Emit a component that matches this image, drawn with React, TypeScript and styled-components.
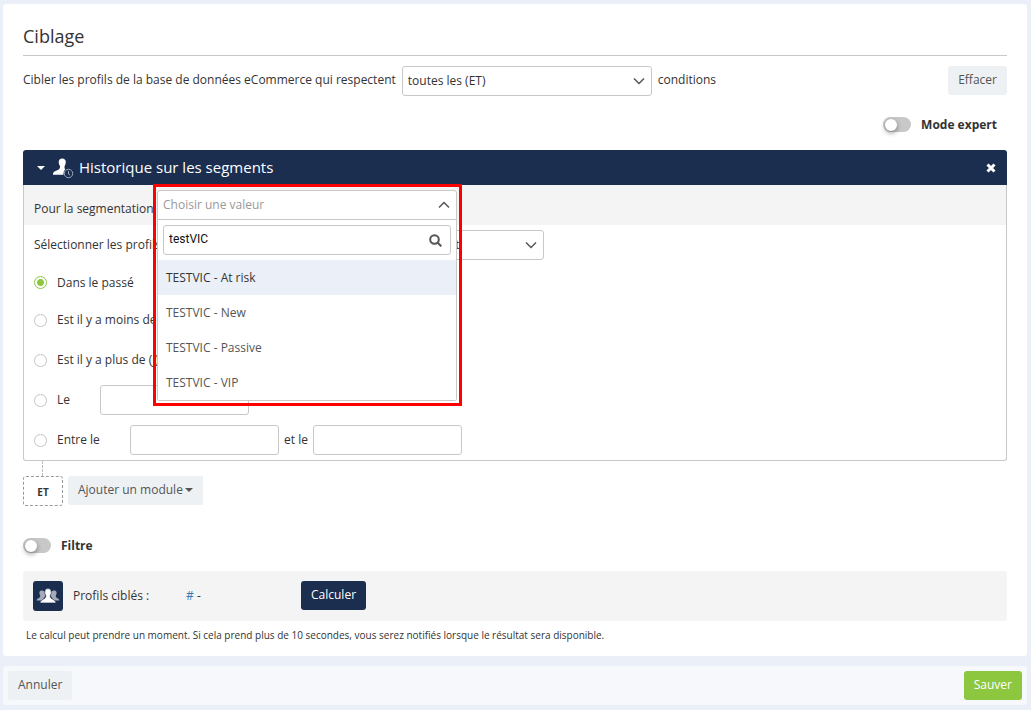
import React, { useState } from "react";
import styled, { createGlobalStyle } from "styled-components";

const navy = "#1b2e50";
const line = "#c8c8c8";
const ink = "#333333";

const GlobalStyle = createGlobalStyle`
  *, *::before, *::after { box-sizing: border-box; }
  body {
    margin: 0;
    background: #ebf0f8;
    color: ${ink};
    font: 12px/20px "Open Sans", "Noto Sans", sans-serif;
  }
  button, input, select { font: inherit; color: inherit; }
`;

const Page = styled.div`
  display: flex;
  flex-direction: column;
  gap: 10px;
  padding: 4px 4px 5px 3px;
`;

const Card = styled.main`
  background: #fff;
  border-radius: 3px;
  padding: 20px 20px 12px;
`;

const Title = styled.h1`
  margin: 0;
  padding-bottom: 7px;
  border-bottom: 1px solid ${line};
  font-size: 18px;
  line-height: 24px;
  font-weight: 400;
`;

const TargetBar = styled.div`
  display: flex;
  align-items: center;
  gap: 6px;
  margin-top: 10px;
`;

const BarText = styled.label`
  padding-bottom: 2px;
`;

const Spacer = styled.div`
  flex: 1;
`;

const Button = styled.button<{ $tone?: "navy" | "green" }>`
  height: 29px;
  margin: 0 0 1px;
  padding: 0 10px 2px;
  border: 0;
  border-radius: 3px;
  white-space: nowrap;
  background: ${(p) => (p.$tone === "navy" ? navy : p.$tone === "green" ? "#8dc63f" : "#edf1f4")};
  color: ${(p) => (p.$tone ? "#fff" : "#555")};
  cursor: pointer;
`;

const SelectBox = styled.div`
  position: relative;
  width: 250px;
  height: 30px;
`;

const Select = styled.select`
  appearance: none;
  width: 100%;
  height: 100%;
  padding: 0 30px 1px 5px;
  border: 1px solid ${line};
  border-radius: 3px;
  background: #fff;
`;

const SelectArrow = styled.span`
  position: absolute;
  right: 7px;
  top: 11px;
  display: flex;
  pointer-events: none;
`;

const ToggleLine = styled.div<{ $end?: boolean }>`
  display: flex;
  justify-content: ${(p) => (p.$end ? "flex-end" : "flex-start")};
  padding-right: 10px;
`;

const ToggleLabel = styled.label`
  display: flex;
  align-items: center;
  gap: 10px;
  font-weight: 700;
`;

const ToggleInput = styled.input`
  appearance: none;
  width: 28px;
  height: 15px;
  margin: 0 0 1px;
  padding: 2px;
  border-radius: 8px;
  background: ${line};
  &::before {
    content: "";
    display: block;
    width: 12px;
    height: 12px;
    border-radius: 50%;
    background: #fff;
    box-shadow: 0 2px 5px rgba(0, 0, 0, 0.4);
  }
  &:checked { background: #8dc63f; }
  &:checked::before { margin-left: 12px; }
`;

const ExpertBlock = styled.div`
  margin: 19px 0 15px;
`;

const ModuleHeader = styled.header`
  display: flex;
  align-items: center;
  height: 35px;
  padding: 0 11px 0 14px;
  border-radius: 3px 3px 0 0;
  background: ${navy};
  color: #fff;
`;

const ModuleTitle = styled.h2`
  margin: 0 0 0 5px;
  padding-bottom: 2px;
  flex: 1;
  font-size: 15px;
  line-height: 20px;
  font-weight: 400;
`;

const IconButton = styled.button`
  display: flex;
  padding: 0;
  border: 0;
  background: none;
  color: inherit;
  cursor: pointer;
`;

const ModuleBody = styled.div`
  border: 1px solid ${line};
  border-top: 0;
  border-radius: 0 0 3px 3px;
`;

const Row = styled.div<{ $shaded?: boolean; $short?: boolean }>`
  display: flex;
  align-items: center;
  height: ${(p) => (p.$short ? 35 : 40)}px;
  padding-left: 10px;
  white-space: nowrap;
  background: ${(p) => (p.$shaded ? "#f4f4f4" : "transparent")};
`;

const RowLabel = styled.label<{ $width: number; $low?: boolean }>`
  width: ${(p) => p.$width}px;
  padding-top: ${(p) => (p.$low ? 8 : 0)}px;
`;

const Radio = styled.input`
  appearance: none;
  flex: none;
  width: 13px;
  height: 13px;
  margin: 0 10px 0 0;
  border: 1px solid #c4c4c4;
  border-radius: 50%;
  background: #fff;
  &:checked {
    border-color: #8dc63f;
    background: radial-gradient(circle, #8dc63f 3px, #fff 4px);
  }
`;

const RadioLabel = styled.label<{ $width?: number }>`
  width: ${(p) => (p.$width ? `${p.$width}px` : "auto")};
`;

const DateInput = styled.input`
  width: 149px;
  height: 30px;
  padding: 0 5px;
  border: 1px solid ${line};
  border-radius: 3px;
  background: #fff;
`;

const Between = styled.label`
  padding: 0 5px;
`;

const Picker = styled.div`
  position: relative;
  z-index: 1;
  width: 300px;
  height: 30px;
`;

const PickerField = styled.button`
  display: flex;
  align-items: center;
  justify-content: space-between;
  width: 100%;
  height: 30px;
  padding: 0 6px 1px 5px;
  border: 1px solid ${line};
  border-radius: 3px 3px 0 0;
  background: #fff;
  color: #999;
`;

const PickerMenu = styled.div`
  position: absolute;
  top: 30px;
  left: 0;
  right: 0;
  border: 1px solid ${line};
  border-top: 0;
  border-radius: 0 0 3px 3px;
  background: #fff;
`;

const Highlight = styled.div`
  position: absolute;
  inset: -6px -5px -186px -4px;
  border: 3px solid #f00;
  pointer-events: none;
`;

const SearchBox = styled.div`
  display: flex;
  align-items: center;
  height: 30px;
  margin: 5px;
  padding: 0 8px 0 5px;
  border: 1px solid ${line};
  border-radius: 3px;
`;

const SearchInput = styled.input`
  flex: 1;
  min-width: 0;
  padding: 0 0 3px;
  border: 0;
  outline: 0;
  background: none;
  color: #111;
  font: 12px/20px Roboto, "Liberation Sans", sans-serif;
`;

const Options = styled.ul`
  margin: 0;
  padding: 0;
  list-style: none;
`;

const Option = styled.li<{ $active: boolean }>`
  height: 35px;
  padding-left: 8px;
  line-height: 35px;
  color: ${(p) => (p.$active ? ink : "#555")};
  background: ${(p) => (p.$active ? "#ebf0f8" : "#fff")};
`;

const Connector = styled.div`
  width: 1px;
  height: 15px;
  margin-left: 19px;
  border-left: 1px dashed #bbb;
`;

const AddLine = styled.div`
  display: flex;
  gap: 5px;
`;

const Operator = styled.button`
  width: 40px;
  height: 30px;
  padding: 2px 0 0;
  border: 1px dashed #999;
  border-radius: 3px;
  background: #fff;
  font-size: 10px;
  font-weight: 700;
`;

const AddButton = styled(Button)`
  display: flex;
  align-items: center;
  gap: 2px;
  border-radius: 3px 0 0 3px;
`;

const FilterBlock = styled.div`
  margin: 30px 0 15px;
`;

const Summary = styled.div`
  display: flex;
  align-items: center;
  height: 50px;
  padding: 0 10px;
  border-radius: 3px;
  background: #f4f4f4;
`;

const Badge = styled.span`
  display: flex;
  align-items: center;
  justify-content: center;
  width: 30px;
  height: 30px;
  margin-right: 10px;
  border-radius: 3px;
  background: ${navy};
`;

const SummaryLabel = styled.span`
  width: 113px;
`;

const Count = styled.span`
  width: 115px;
`;

const Hash = styled.span`
  color: #337ab7;
`;

const Note = styled.p`
  margin: 5px 3px 0;
  font-size: 10px;
  line-height: 18px;
`;

const Footer = styled.footer`
  display: flex;
  justify-content: space-between;
  padding: 5px 5px 4px;
  border-radius: 3px;
  background: #f6f8fc;
`;

const Chevron = ({ up = false }: { up?: boolean }) => (
  <svg width="12" height="8" viewBox="0 0 12 8" fill="none" stroke="#555" strokeWidth="1.5" aria-hidden="true">
    <path d={up ? "M1 6.5 6 1.5l5 5" : "M1 1.5l5 5 5-5"} />
  </svg>
);

const Caret = () => (
  <svg width="8" height="4" viewBox="0 0 8 4" fill="currentColor" aria-hidden="true">
    <path d="M0 0h8L4 4z" />
  </svg>
);

const PersonGlyph = styled.svg`
  margin-left: 7px;
`;

const PersonClock = () => (
  <PersonGlyph width="22" height="22" viewBox="0 0 22 22" aria-hidden="true">
    <path
      fill="#fff"
      d="M10.200 1.500C8 1.500 6.600 2.900 6.700 5.200c0 1.500.6 2.800 1.300 3.900.3 1.500-.2 2.900-1.600 3.700L3 14.200c-1.300.7-2 1.600-2 3.500h10.500c0-2.500.4-4.300 1.600-5.300-.6-1-.8-2.200-.4-3.300.7-1.300 1.100-2.700 1.100-4.300C13.800 2.900 12.300 1.500 10.200 1.500z"
    />
    <circle cx="16.500" cy="16.500" r="4.200" fill={navy} stroke="#9aa5b8" />
    <path d="M16.500 14v3l1.500 1" fill="none" stroke="#9aa5b8" />
  </PersonGlyph>
);

const People = () => (
  <svg width="24" height="16" viewBox="0 0 24 16" aria-hidden="true">
    <g fill="#a4abb9">
      <path d="M5.500 2.500C4 2.500 3.400 3.500 3.400 5c0 1.500.9 2.200.9 3.300C4.300 10 1 10.300.6 12.500H6l3-4V4C8 3 7 2.500 5.500 2.500z" />
      <path d="M18.500 2.500c1.500 0 2.100 1 2.100 2.500 0 1.500-.9 2.200-.9 3.300 0 1.700 3.300 2 3.700 4.200H18l-3-4V4c1-1 2-1.500 3.500-1.500z" />
    </g>
    <path
      fill="#fff"
      stroke={navy}
      strokeWidth=".6"
      d="M12 .6c-2.200 0-3.200 1.400-3.200 3.600 0 2 1 2.800 1 4.300 0 2.600-5.500 2.800-5.800 6.400h16c-.3-3.600-5.800-3.800-5.800-6.400 0-1.500 1-2.300 1-4.300C15.200 2 14.200.6 12 .6z"
    />
  </svg>
);

const Magnifier = () => (
  <svg width="13" height="13" viewBox="0 0 13 13" fill="none" stroke="#555" strokeWidth="2" aria-hidden="true">
    <circle cx="5.500" cy="5.500" r="4.300" />
    <path d="M8.700 8.700 12.300 12.300" />
  </svg>
);

const Cross = () => (
  <svg width="10" height="10" viewBox="0 0 10 10" stroke="#fff" strokeWidth="3" aria-hidden="true">
    <path d="M1.500 1.500l7 7M8.500 1.500l-7 7" />
  </svg>
);

const segments = ["TESTVIC - At risk", "TESTVIC - New", "TESTVIC - Passive", "TESTVIC - VIP"];

function Dropdown({ id, options }: { id: string; options: string[] }) {
  return (
    <SelectBox>
      <Select id={id}>
        {options.map((o) => (
          <option key={o}>{o}</option>
        ))}
      </Select>
      <SelectArrow>
        <Chevron />
      </SelectArrow>
    </SelectBox>
  );
}

function SegmentPicker() {
  const [query, setQuery] = useState("testVIC");
  const shown = segments.filter((s) => s.toLowerCase().includes(query.toLowerCase()));
  return (
    <Picker>
      <PickerField id="segment" type="button" aria-expanded="true">
        Choisir une valeur
        <Chevron up />
      </PickerField>
      <PickerMenu>
        <SearchBox>
          <SearchInput aria-label="Rechercher" value={query} onChange={(e) => setQuery(e.target.value)} />
          <Magnifier />
        </SearchBox>
        <Options>
          {shown.map((s, i) => (
            <Option key={s} $active={i === 0}>
              {s}
            </Option>
          ))}
        </Options>
      </PickerMenu>
      <Highlight />
    </Picker>
  );
}

export default function App() {
  const [when, setWhen] = useState("past");
  const radio = (value: string) => (
    <Radio type="radio" name="when" id={value} checked={when === value} onChange={() => setWhen(value)} />
  );
  return (
    <>
      <GlobalStyle />
      <Page>
        <Card>
          <Title>Ciblage</Title>
          <TargetBar>
            <BarText htmlFor="match">Cibler les profils de la base de données eCommerce qui respectent</BarText>
            <Dropdown id="match" options={["toutes les (ET)", "au moins une (OU)"]} />
            <BarText as="span">conditions</BarText>
            <Spacer />
            <Button type="button">Effacer</Button>
          </TargetBar>
          <ExpertBlock>
            <ToggleLine $end>
              <ToggleLabel>
                <ToggleInput type="checkbox" />
                Mode expert
              </ToggleLabel>
            </ToggleLine>
          </ExpertBlock>
          <section>
            <ModuleHeader>
              <IconButton type="button" aria-label="Replier">
                <Caret />
              </IconButton>
              <PersonClock />
              <ModuleTitle>Historique sur les segments</ModuleTitle>
              <IconButton type="button" aria-label="Supprimer">
                <Cross />
              </IconButton>
            </ModuleHeader>
            <ModuleBody>
              <Row $shaded>
                <RowLabel $width={123} $low htmlFor="segment">Pour la segmentation</RowLabel>
                <SegmentPicker />
              </Row>
              <Row>
                <RowLabel $width={260} htmlFor="relation">Sélectionner les profils</RowLabel>
                <Dropdown id="relation" options={["qui étaient dans un segment"]} />
              </Row>
              <Row $short>
                {radio("past")}
                <RadioLabel htmlFor="past">Dans le passé</RadioLabel>
              </Row>
              <Row>
                {radio("less")}
                <RadioLabel htmlFor="less">Est il y a moins de</RadioLabel>
              </Row>
              <Row>
                {radio("more")}
                <RadioLabel htmlFor="more">Est il y a plus de (j)</RadioLabel>
              </Row>
              <Row>
                {radio("on")}
                <RadioLabel htmlFor="on" $width={43}>Le</RadioLabel>
                <DateInput aria-label="Date" />
              </Row>
              <Row>
                {radio("between")}
                <RadioLabel htmlFor="between" $width={73}>Entre le</RadioLabel>
                <DateInput aria-label="Date de début" />
                <Between htmlFor="end">et le</Between>
                <DateInput id="end" />
              </Row>
            </ModuleBody>
          </section>
          <Connector />
          <AddLine>
            <Operator type="button">ET</Operator>
            <AddButton type="button">
              Ajouter un module
              <Caret />
            </AddButton>
          </AddLine>
          <FilterBlock>
            <ToggleLine>
              <ToggleLabel>
                <ToggleInput type="checkbox" />
                Filtre
              </ToggleLabel>
            </ToggleLine>
          </FilterBlock>
          <Summary>
            <Badge>
              <People />
            </Badge>
            <SummaryLabel>Profils ciblés :</SummaryLabel>
            <Count>
              <Hash>#</Hash> -
            </Count>
            <Button type="button" $tone="navy">Calculer</Button>
          </Summary>
          <Note>
            Le calcul peut prendre un moment. Si cela prend plus de 10 secondes, vous serez notifiés lorsque le résultat sera
            disponible.
          </Note>
        </Card>
        <Footer>
          <Button type="button">Annuler</Button>
          <Button type="button" $tone="green">Sauver</Button>
        </Footer>
      </Page>
    </>
  );
}
